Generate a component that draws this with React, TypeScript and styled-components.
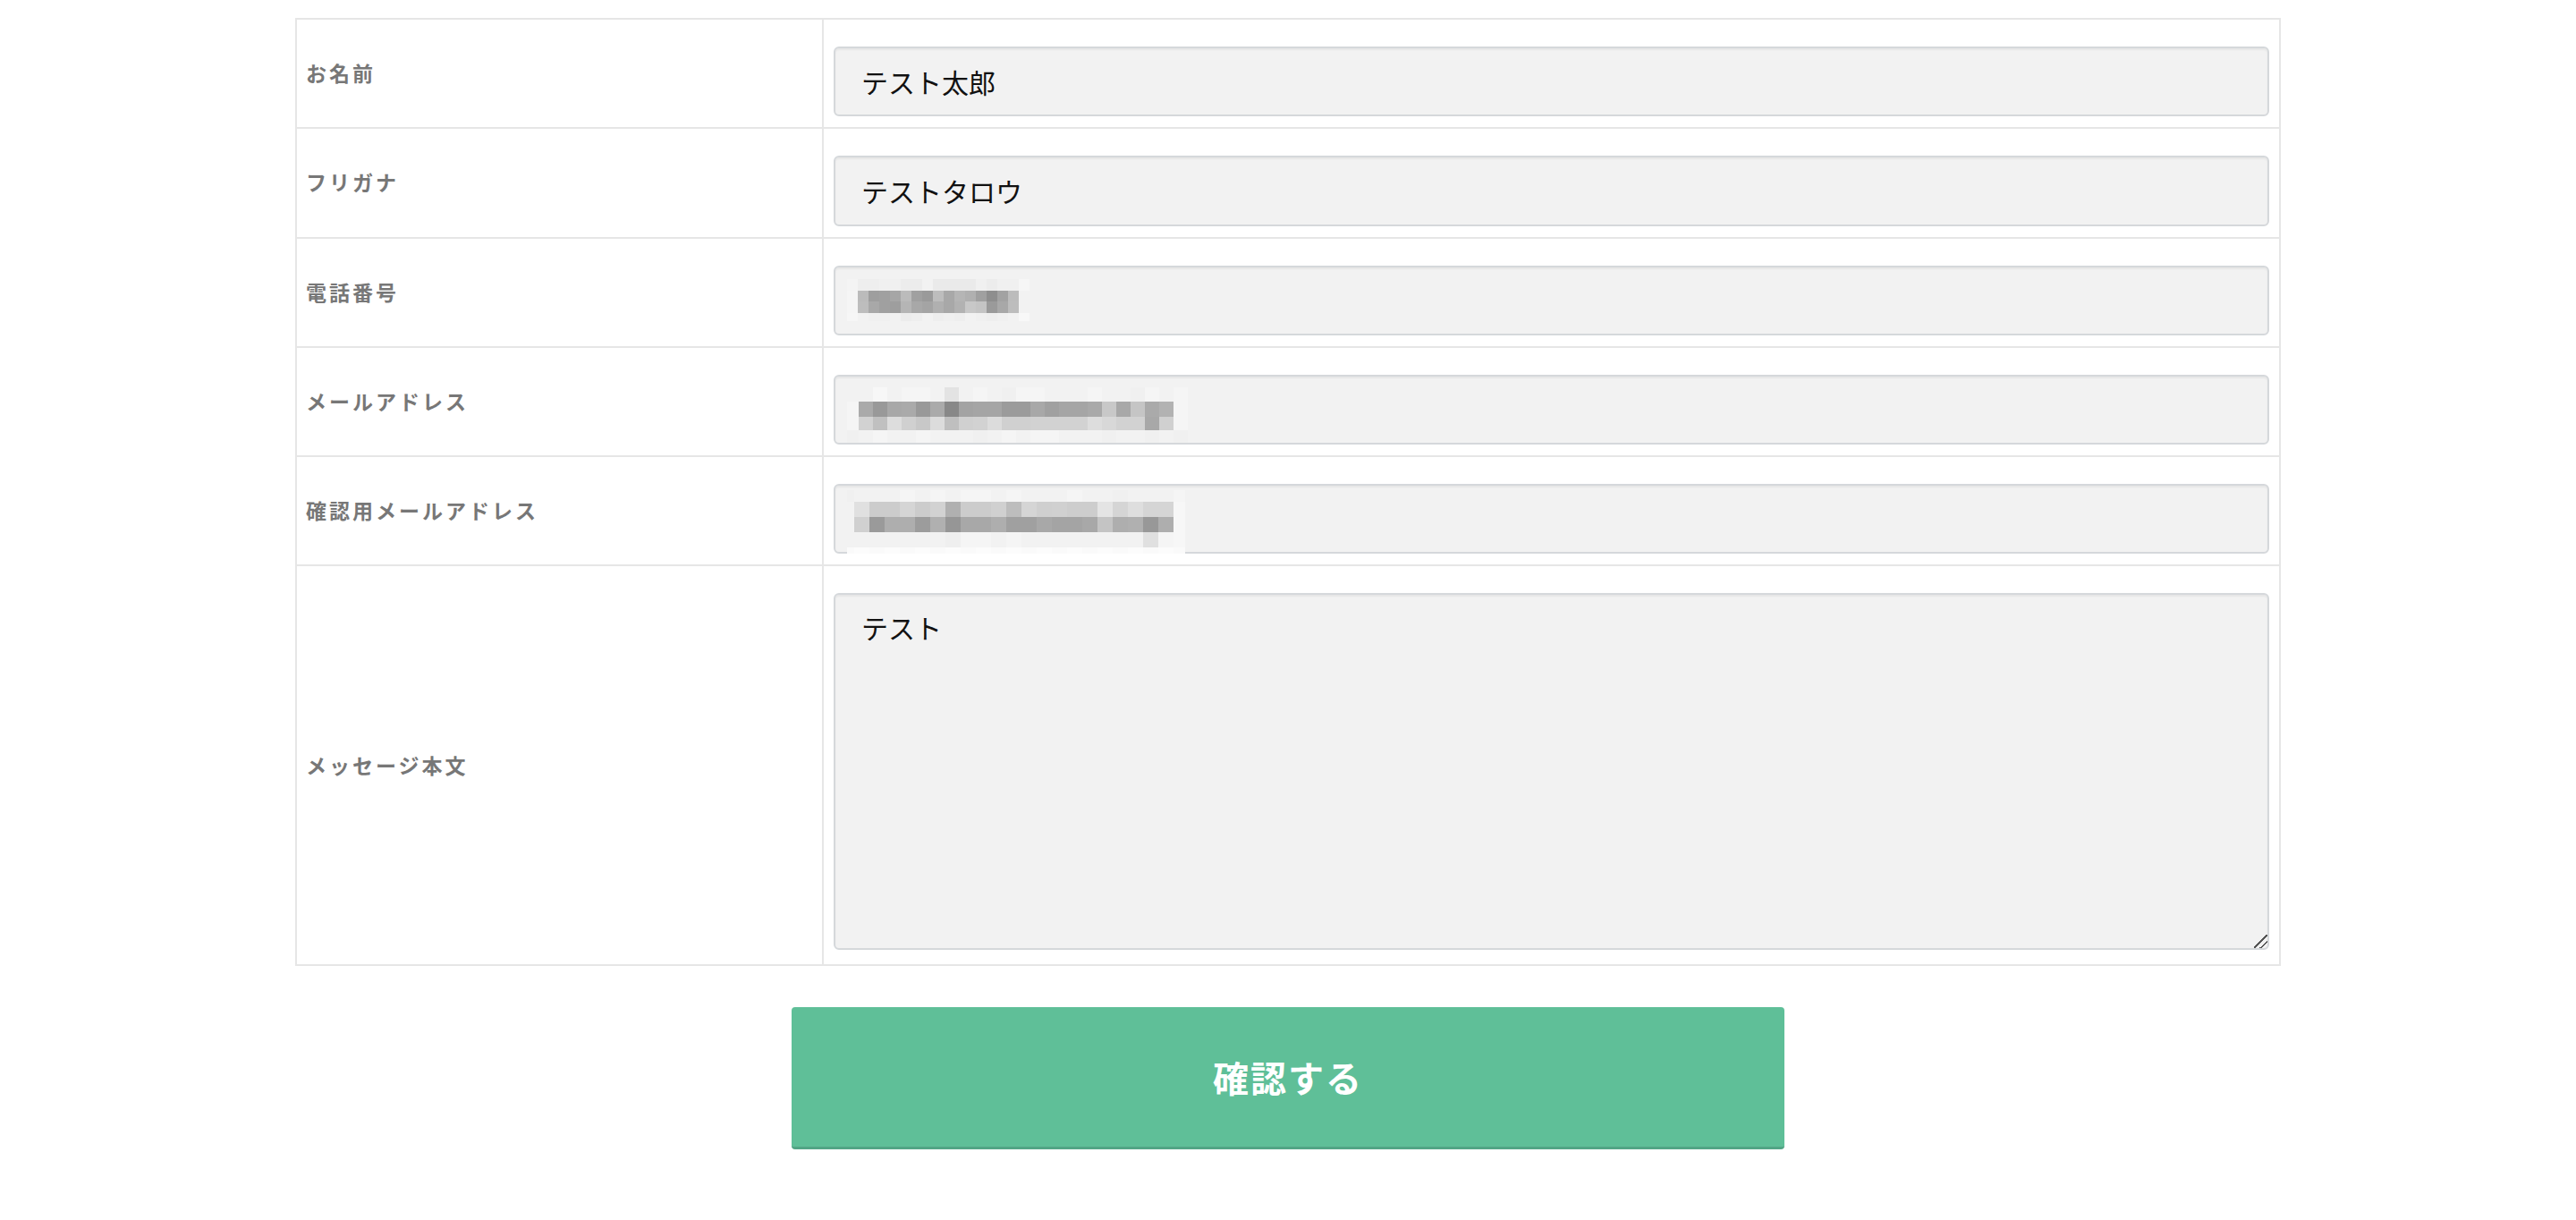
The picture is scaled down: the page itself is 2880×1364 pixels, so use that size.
import styled, { createGlobalStyle, css } from "styled-components";

const GlobalStyle = createGlobalStyle`
	body {
		margin: 0;
		background: #ffffff;
		font-family: "Noto Sans CJK JP", "Noto Sans", sans-serif;
	}
`;

interface MosaicSpec {
	widths: number[];
	heights: number[];
	rows: string[];
}

const fill = (n: number, v: number) => Array.from({ length: n }, () => v);

// redacted values: the reference shows them as pixel mosaics
const phoneMosaic: MosaicSpec = {
	widths: fill(17, 12),
	heights: [13, 12, 13, 9],
	rows: [
		"f4eeeef0f0ececf2eaeaeaeaf0ecf0f0f6",
		"f5bb9ea0a6bba09abda8b5b0a08ea2bcf2",
		"f5bda8a09eb5a8a4b0a8b2c8c49aa8bdf2",
		"f6f2f0f0f2eceef2eef0eef2f0eef0f2f8",
	],
};

const mailMosaic: MosaicSpec = {
	widths: [13, ...fill(22, 16), 16],
	heights: [16, 17, 15, 14],
	rows: [
		"f2f2f7f2f5f5f2e3f2f5f2f0f5f5f2f2f2f5f2f2f0f5f2f5",
		"f5aa99a8aa99aa88a3a5a59b9ba8a0a5a5a9c8a8c5aab2f5",
		"f5d2c0ddd0c8dcbfd0d2dcd0d0d2d2d2d2ddd8d2d2a8d0f5",
		"f0f2f5f2f2f5f2f2f2f0f2f5f2f5f5f2f2f2f0f2f2f0f2f0",
	],
};

const confirmMosaic: MosaicSpec = {
	widths: [8, ...fill(21, 17), 13],
	heights: [13, 17, 17, 17, 7],
	rows: [
		"f0f2f2f2f5f2f5f2f5f5f2f5f2f2f2f5f2f2f0f2f2f2f5",
		"f2e0ccccd5ccd2b0ccccd0bdd5cfd0cdcde4d5ded5d5f7",
		"f2d09aaeae9cb096a8a8aea0a0a8a4a4a8c4aeb098aef7",
		"f2f2f2f2f2f2f2eff5f5f2f5f2f2f2f2f2f2f2f2e0f5f7",
		"fafcfafcfafcfafcfafcfafcfafcfafcfafcfafcfafcfa",
	],
};

const Page = styled.div`
	display: flex;
	flex-direction: column;
	align-items: center;
	padding: 20px 0 60px;
`;

const FormTable = styled.div`
	width: 2220px;
	border: 2px solid #e6e6e6;
	box-sizing: border-box;
`;

const Row = styled.div`
	display: grid;
	grid-template-columns: 589px 1fr;
	& + & {
		border-top: 2px solid #e6e6e6;
	}
`;

const Label = styled.div`
	display: flex;
	align-items: center;
	box-sizing: border-box;
	padding: 0 0 2px 10px;
	border-right: 2px solid #e6e6e6;
	color: #777777;
	font-size: 23px;
	font-weight: 700;
	letter-spacing: 3px;
`;

const Cell = styled.div<{ $tall?: boolean }>`
	padding: 30px 11px ${(p) => (p.$tall ? "16px" : "12px")} 11px;
`;

const fieldCss = css`
	display: block;
	width: 100%;
	box-sizing: border-box;
	margin: 0;
	border: 2px solid #d5d8db;
	border-radius: 6px;
	background: #f2f2f2;
	box-shadow: inset 0 2px 2px rgba(0, 0, 0, 0.05);
	color: #111111;
	font-family: "Noto Sans CJK JP", "Noto Sans", sans-serif;
	font-size: 30px;
	outline: none;
`;

const TextField = styled.input`
	${fieldCss};
	height: 78.25px;
	padding: 0 29px;
`;

const MaskedField = styled.div<{ $bottom?: boolean }>`
	${fieldCss};
	height: 78.25px;
	padding-left: 13px;
	display: flex;
	align-items: ${(p) => (p.$bottom ? "flex-end" : "center")};
`;

const MosaicSvg = styled.svg<{ $dy?: number; $bleed?: boolean }>`
	display: block;
	flex-shrink: 0;
	margin-top: ${(p) => p.$dy ?? 0}px;
	margin-bottom: ${(p) => (p.$bleed ? "-2px" : "0")};
	shape-rendering: crispEdges;
`;

const MessageField = styled.textarea`
	${fieldCss};
	height: 399px;
	padding: 14px 29px;
	line-height: 1.5;
	resize: vertical;

	&::-webkit-resizer {
		background: linear-gradient(
			135deg,
			transparent 0 46%,
			#555555 46% 54%,
			transparent 54% 70%,
			#555555 70% 78%,
			transparent 78%
		);
	}
`;

const SubmitButton = styled.button`
	margin-top: 46px;
	width: 1110px;
	height: 159px;
	border: none;
	border-bottom: 3px solid #52a585;
	border-radius: 4px;
	background: #5fbf98;
	color: #ffffff;
	font-family: "Noto Sans CJK JP", "Noto Sans", sans-serif;
	font-size: 40px;
	font-weight: 700;
	letter-spacing: 2px;
	cursor: pointer;
`;

const Mosaic = ({
	spec,
	dy,
	bleed,
}: {
	spec: MosaicSpec;
	dy?: number;
	bleed?: boolean;
}) => {
	const width = spec.widths.reduce((a, b) => a + b, 0);
	const height = spec.heights.reduce((a, b) => a + b, 0);
	let y = 0;
	return (
		<MosaicSvg
			$bleed={bleed}
			$dy={dy}
			height={height}
			viewBox={`0 0 ${width} ${height}`}
			width={width}
		>
			{spec.rows.map((row, r) => {
				const cells = row.match(/../g) ?? [];
				const top = y;
				y += spec.heights[r];
				let x = 0;
				return cells.map((v, c) => {
					const left = x;
					x += spec.widths[c];
					return (
						<rect
							fill={`#${v}${v}${v}`}
							height={spec.heights[r]}
							key={`${r}-${c}`}
							width={spec.widths[c]}
							x={left}
							y={top}
						/>
					);
				});
			})}
		</MosaicSvg>
	);
};

export default function App() {
	return (
		<>
			<GlobalStyle />
			<Page>
				<FormTable>
					<Row>
						<Label>お名前</Label>
						<Cell>
							<TextField defaultValue="テスト太郎" readOnly />
						</Cell>
					</Row>
					<Row>
						<Label>フリガナ</Label>
						<Cell>
							<TextField defaultValue="テストタロウ" readOnly />
						</Cell>
					</Row>
					<Row>
						<Label>電話番号</Label>
						<Cell>
							<MaskedField>
								<Mosaic spec={phoneMosaic} />
							</MaskedField>
						</Cell>
					</Row>
					<Row>
						<Label>メールアドレス</Label>
						<Cell>
							<MaskedField>
								<Mosaic dy={12} spec={mailMosaic} />
							</MaskedField>
						</Cell>
					</Row>
					<Row>
						<Label>確認用メールアドレス</Label>
						<Cell>
							<MaskedField $bottom>
								<Mosaic bleed spec={confirmMosaic} />
							</MaskedField>
						</Cell>
					</Row>
					<Row>
						<Label>メッセージ本文</Label>
						<Cell $tall>
							<MessageField defaultValue="テスト" readOnly />
						</Cell>
					</Row>
				</FormTable>
				<SubmitButton type="button">確認する</SubmitButton>
			</Page>
		</>
	);
}
